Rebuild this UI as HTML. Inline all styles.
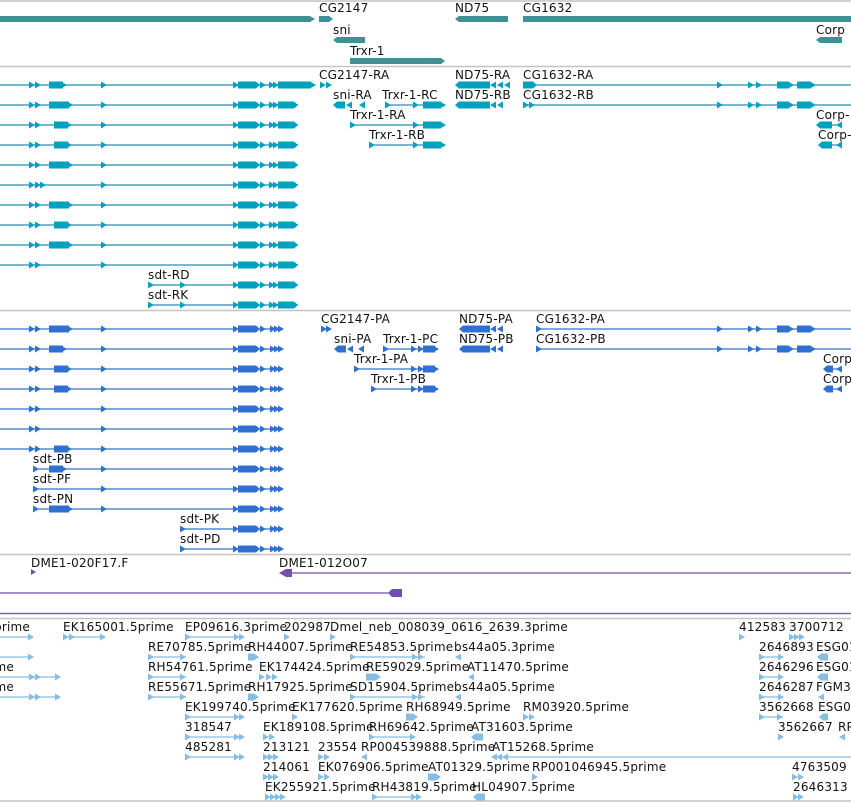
<!DOCTYPE html>
<html><head><meta charset="utf-8"><style>
html,body{margin:0;padding:0;background:#fff;}
svg{display:block;}
text{font-family:"DejaVu Sans","Liberation Sans",sans-serif;font-size:12px;letter-spacing:0.2px;fill:#111;}
</style></head><body>
<svg width="851" height="802" viewBox="0 0 851 802" xmlns="http://www.w3.org/2000/svg">
<defs>
<polygon id="tr" points="0,-3.5 6,0 0,3.5"/>
<polygon id="tl" points="6,-3.5 0,0 6,3.5"/>
<g id="cyEnd">
 <use href="#tr" x="233"/><polygon points="238,-3.5 256,-3.5 260,0 256,3.5 238,3.5"/>
 <use href="#tr" x="260"/><use href="#tr" x="269"/><use href="#tr" x="273"/>
 <polygon points="278,-3.5 294,-3.5 298,0 294,3.5 278,3.5"/>
</g>
<g id="cyStart"><use href="#tr" x="29"/><use href="#tr" x="35"/><use href="#tr" x="101"/></g>
<g id="blEnd">
 <use href="#tr" x="233"/><polygon points="238,-3.5 256,-3.5 260,0 256,3.5 238,3.5"/>
 <use href="#tr" x="260"/><use href="#tr" x="270"/><use href="#tr" x="274"/><use href="#tr" x="278"/>
</g>
</defs>

<g stroke="#c4c4c4" stroke-width="1.5">
<line x1="0" y1="1" x2="851" y2="1"/><line x1="0" y1="66.5" x2="851" y2="66.5"/>
<line x1="0" y1="310.5" x2="851" y2="310.5"/><line x1="0" y1="554.5" x2="851" y2="554.5"/>
<line x1="0" y1="618.5" x2="851" y2="618.5"/><line x1="0" y1="801" x2="851" y2="801"/>
</g>
<line x1="0" y1="613.5" x2="851" y2="613.5" stroke="#7a64a8" stroke-width="1.5"/>

<g fill="#3f9195">
<polygon points="0,16 310,16 315,19 310,22 0,22"/>
<polygon points="319,16 329,16 333,19 329,22 319,22"/>
<polygon points="337,37 365,37 365,43 337,43 333,40"/>
<polygon points="350,58 441,58 445,61 441,64 350,64"/>
<polygon points="459,16 508,16 508,22 459,22 455,19"/>
<rect x="523" y="16" width="328" height="6"/>
<polygon points="820,37 842,37 842,43 820,43 816,40"/>
</g>
<text x="319" y="12">CG2147</text><text x="333" y="34">sni</text><text x="350" y="55">Trxr-1</text>
<text x="455" y="12">ND75</text><text x="523" y="12">CG1632</text><text x="816" y="34">Corp</text>

<g fill="#00a0c0" stroke="#1893b3" stroke-width="1.2">
<g stroke="#1893b3"><line x1="0" y1="85" x2="298" y2="85"/><line x1="0" y1="105" x2="298" y2="105"/><line x1="0" y1="125" x2="298" y2="125"/><line x1="0" y1="145" x2="298" y2="145"/><line x1="0" y1="165" x2="298" y2="165"/><line x1="0" y1="185" x2="298" y2="185"/><line x1="0" y1="205" x2="298" y2="205"/><line x1="0" y1="225" x2="298" y2="225"/><line x1="0" y1="245" x2="298" y2="245"/><line x1="0" y1="265" x2="298" y2="265"/><line x1="148" y1="285" x2="298" y2="285"/><line x1="148" y1="305" x2="298" y2="305"/>
<line x1="385" y1="105" x2="445" y2="105"/><line x1="350" y1="125" x2="445" y2="125"/><line x1="369" y1="145" x2="445" y2="145"/>
<line x1="523" y1="85" x2="851" y2="85"/><line x1="523" y1="105" x2="851" y2="105"/><line x1="830" y1="125" x2="842" y2="125"/><line x1="830" y1="145" x2="842" y2="145"/></g>
<g stroke="none">
<g transform="translate(0,85)"><use href="#cyStart"/><rect x="49" y="-3.5" width="14" height="7"/><use href="#tr" x="61"/><use href="#cyEnd"/><rect x="278" y="-3.5" width="33" height="7"/><use href="#tr" x="310"/></g>
<g transform="translate(0,105)"><use href="#cyStart"/><rect x="49" y="-3.5" width="20" height="7"/><use href="#tr" x="67"/><use href="#cyEnd"/></g>
<g transform="translate(0,125)"><use href="#cyStart"/><rect x="54" y="-3.5" width="14" height="7"/><use href="#tr" x="66"/><use href="#cyEnd"/></g>
<g transform="translate(0,145)"><use href="#cyStart"/><rect x="54" y="-3.5" width="14" height="7"/><use href="#tr" x="66"/><use href="#cyEnd"/></g>
<g transform="translate(0,165)"><use href="#cyStart"/><rect x="49" y="-3.5" width="20" height="7"/><use href="#tr" x="67"/><use href="#cyEnd"/></g>
<g transform="translate(0,185)"><use href="#cyStart"/><use href="#tr" x="40"/><use href="#cyEnd"/></g>
<g transform="translate(0,205)"><use href="#cyStart"/><rect x="49" y="-3.5" width="20" height="7"/><use href="#tr" x="67"/><use href="#cyEnd"/></g>
<g transform="translate(0,225)"><use href="#cyStart"/><rect x="54" y="-3.5" width="14" height="7"/><use href="#tr" x="66"/><use href="#cyEnd"/></g>
<g transform="translate(0,245)"><use href="#cyStart"/><rect x="49" y="-3.5" width="20" height="7"/><use href="#tr" x="67"/><use href="#cyEnd"/></g>
<g transform="translate(0,265)"><use href="#cyStart"/><use href="#cyEnd"/></g>
<g transform="translate(0,285)"><use href="#tr" x="148"/><use href="#tr" x="180"/><use href="#cyEnd"/></g>
<g transform="translate(0,305)"><use href="#tr" x="148"/><use href="#tr" x="180"/><use href="#cyEnd"/></g>
<use href="#tr" x="320" y="85"/><use href="#tr" x="326" y="85"/>
<polygon points="337,101.5 345,101.5 345,108.5 337,108.5 333,105"/><use href="#tl" x="346" y="105"/><use href="#tl" x="359" y="105"/>
<use href="#tr" x="385" y="105"/><use href="#tr" x="413" y="105"/><rect x="423" y="101.5" width="18" height="7"/><use href="#tr" x="440" y="105"/>
<use href="#tr" x="350" y="125"/><use href="#tr" x="413" y="125"/><rect x="423" y="121.5" width="18" height="7"/><use href="#tr" x="440" y="125"/>
<use href="#tr" x="369" y="145"/><use href="#tr" x="413" y="145"/><rect x="423" y="141.5" width="18" height="7"/><use href="#tr" x="440" y="145"/>
<polygon points="459,81.5 490,81.5 490,88.5 459,88.5 455,85"/><use href="#tl" x="464" y="85"/><use href="#tl" x="490" y="85"/><use href="#tl" x="497" y="85"/><use href="#tl" x="504" y="85"/>
<polygon points="459,101.5 490,101.5 490,108.5 459,108.5 455,105"/><use href="#tl" x="464" y="105"/><use href="#tl" x="490" y="105"/><use href="#tl" x="497" y="105"/>
<polygon points="523,81.5 533,81.5 537,85 533,88.5 523,88.5"/><use href="#tr" x="523" y="105"/><use href="#tr" x="529" y="105"/>
<g transform="translate(0,85)"><use href="#tr" x="717"/><use href="#tr" x="748"/><use href="#tr" x="756"/><rect x="777" y="-3.5" width="12" height="7"/><use href="#tr" x="788"/><rect x="797" y="-3.5" width="14" height="7"/><use href="#tr" x="810"/></g>
<g transform="translate(0,105)"><use href="#tr" x="717"/><use href="#tr" x="748"/><use href="#tr" x="756"/><rect x="777" y="-3.5" width="12" height="7"/><use href="#tr" x="788"/><rect x="797" y="-3.5" width="14" height="7"/><use href="#tr" x="810"/></g>
<polygon points="820,121.5 832,121.5 832,128.5 820,128.5 816,125"/><use href="#tl" x="836" y="125"/>
<polygon points="822,141.5 832,141.5 832,148.5 822,148.5 818,145"/><use href="#tl" x="836" y="145"/>
</g></g>
<text x="319" y="79">CG2147-RA</text><text x="333" y="99">sni-RA</text><text x="382" y="99">Trxr-1-RC</text>
<text x="350" y="119">Trxr-1-RA</text><text x="369" y="139">Trxr-1-RB</text>
<text x="455" y="79">ND75-RA</text><text x="523" y="79">CG1632-RA</text><text x="455" y="99">ND75-RB</text><text x="523" y="99">CG1632-RB</text>
<text x="816" y="119">Corp-</text><text x="818" y="139">Corp-</text>
<text x="148" y="279">sdt-RD</text><text x="148" y="299">sdt-RK</text>

<g fill="#3070d0" stroke="#3070d0" stroke-width="1.2">
<line x1="0" y1="329" x2="283" y2="329"/><line x1="0" y1="349" x2="283" y2="349"/><line x1="0" y1="369" x2="283" y2="369"/><line x1="0" y1="389" x2="283" y2="389"/><line x1="0" y1="409" x2="283" y2="409"/><line x1="0" y1="429" x2="283" y2="429"/><line x1="0" y1="449" x2="283" y2="449"/><line x1="33" y1="469" x2="283" y2="469"/><line x1="33" y1="489" x2="283" y2="489"/><line x1="33" y1="509" x2="283" y2="509"/><line x1="180" y1="529" x2="283" y2="529"/><line x1="180" y1="549" x2="283" y2="549"/>
<line x1="354" y1="369" x2="438" y2="369"/><line x1="371" y1="389" x2="438" y2="389"/><line x1="383" y1="349" x2="438" y2="349"/>
<line x1="536" y1="329" x2="851" y2="329"/><line x1="536" y1="349" x2="851" y2="349"/><line x1="830" y1="369" x2="842" y2="369"/><line x1="830" y1="389" x2="842" y2="389"/>
<g stroke="none">
<g transform="translate(0,329)"><use href="#cyStart"/><rect x="49" y="-3.5" width="20" height="7"/><use href="#tr" x="67"/><use href="#blEnd"/></g>
<g transform="translate(0,349)"><use href="#cyStart"/><rect x="49" y="-3.5" width="14" height="7"/><use href="#tr" x="61"/><use href="#blEnd"/></g>
<g transform="translate(0,369)"><use href="#cyStart"/><rect x="54" y="-3.5" width="14" height="7"/><use href="#tr" x="66"/><use href="#blEnd"/></g>
<g transform="translate(0,389)"><use href="#cyStart"/><rect x="54" y="-3.5" width="14" height="7"/><use href="#tr" x="66"/><use href="#blEnd"/></g>
<g transform="translate(0,409)"><use href="#cyStart"/><use href="#blEnd"/></g>
<g transform="translate(0,429)"><use href="#cyStart"/><use href="#blEnd"/></g>
<g transform="translate(0,449)"><use href="#cyStart"/><rect x="54" y="-3.5" width="14" height="7"/><use href="#tr" x="66"/><use href="#blEnd"/></g>
<g transform="translate(0,469)"><use href="#tr" x="33"/><rect x="49" y="-3.5" width="14" height="7"/><use href="#tr" x="61"/><use href="#tr" x="101"/><use href="#blEnd"/></g>
<g transform="translate(0,489)"><use href="#tr" x="33"/><use href="#tr" x="101"/><use href="#blEnd"/></g>
<g transform="translate(0,509)"><use href="#tr" x="33"/><rect x="49" y="-3.5" width="20" height="7"/><use href="#tr" x="67"/><use href="#tr" x="101"/><use href="#blEnd"/></g>
<g transform="translate(0,529)"><use href="#tr" x="180"/><use href="#blEnd"/></g>
<g transform="translate(0,549)"><use href="#tr" x="180"/><use href="#blEnd"/></g>
<use href="#tr" x="321" y="329"/><use href="#tr" x="326" y="329"/>
<polygon points="338,345.5 346,345.5 346,352.5 338,352.5 334,349"/><use href="#tl" x="347" y="349"/><use href="#tl" x="358" y="349"/>
<use href="#tr" x="383" y="349"/><use href="#tr" x="411" y="349"/><rect x="423" y="345.5" width="12" height="7"/><use href="#tr" x="433" y="349"/><use href="#tr" x="418" y="349"/>
<use href="#tr" x="354" y="369"/><use href="#tr" x="411" y="369"/><use href="#tr" x="418" y="369"/><rect x="423" y="365.5" width="12" height="7"/><use href="#tr" x="433" y="369"/>
<use href="#tr" x="371" y="389"/><use href="#tr" x="411" y="389"/><use href="#tr" x="418" y="389"/><rect x="423" y="385.5" width="12" height="7"/><use href="#tr" x="433" y="389"/>
<polygon points="463,325.5 490,325.5 490,332.5 463,332.5 459,329"/><use href="#tl" x="468" y="329"/><use href="#tl" x="490" y="329"/><use href="#tl" x="497" y="329"/>
<polygon points="463,345.5 490,345.5 490,352.5 463,352.5 459,349"/><use href="#tl" x="468" y="349"/><use href="#tl" x="490" y="349"/><use href="#tl" x="497" y="349"/>
<use href="#tr" x="536" y="329"/><use href="#tr" x="536" y="349"/>
<g transform="translate(0,329)"><use href="#tr" x="717"/><use href="#tr" x="748"/><use href="#tr" x="756"/><rect x="777" y="-3.5" width="12" height="7"/><use href="#tr" x="788"/><rect x="797" y="-3.5" width="14" height="7"/><use href="#tr" x="810"/></g>
<g transform="translate(0,349)"><use href="#tr" x="717"/><use href="#tr" x="748"/><use href="#tr" x="756"/><rect x="777" y="-3.5" width="12" height="7"/><use href="#tr" x="788"/><rect x="797" y="-3.5" width="14" height="7"/><use href="#tr" x="810"/></g>
<polygon points="827,365.5 833,365.5 833,372.5 827,372.5 823,369"/><use href="#tl" x="836" y="369"/>
<polygon points="827,385.5 833,385.5 833,392.5 827,392.5 823,389"/><use href="#tl" x="836" y="389"/>
</g></g>
<text x="321" y="323">CG2147-PA</text><text x="334" y="343">sni-PA</text><text x="383" y="343">Trxr-1-PC</text>
<text x="354" y="363">Trxr-1-PA</text><text x="371" y="383">Trxr-1-PB</text>
<text x="459" y="323">ND75-PA</text><text x="536" y="323">CG1632-PA</text><text x="459" y="343">ND75-PB</text><text x="536" y="343">CG1632-PB</text>
<text x="823" y="363">Corp</text><text x="823" y="383">Corp</text>
<text x="33" y="463">sdt-PB</text><text x="33" y="483">sdt-PF</text><text x="33" y="503">sdt-PN</text>
<text x="180" y="523">sdt-PK</text><text x="180" y="543">sdt-PD</text>

<g fill="#7050a8" stroke="#7050a8" stroke-width="1.3">
<line x1="284" y1="573" x2="851" y2="573"/><line x1="0" y1="593" x2="400" y2="593"/>
<g stroke="none"><polygon points="31,569 36,572 31,575"/><polygon points="279,573 286,569 292,569 292,577 286,577"/><polygon points="392,589 402,589 402,597 392,597 388,593"/></g>
</g>
<text x="31" y="567">DME1-020F17.F</text><text x="279" y="567">DME1-012O07</text>

<g fill="#86bde2" stroke="#86bde2" stroke-width="1.2">
<line x1="0" y1="637" x2="33" y2="637"/><line x1="63" y1="637" x2="105" y2="637"/><line x1="185" y1="637" x2="243" y2="637"/>
<line x1="0" y1="657" x2="33" y2="657"/><line x1="148" y1="657" x2="186" y2="657"/><line x1="350" y1="657" x2="425" y2="657"/><line x1="759" y1="657" x2="783" y2="657"/>
<line x1="0" y1="677" x2="60" y2="677"/><line x1="148" y1="677" x2="186" y2="677"/><line x1="759" y1="677" x2="783" y2="677"/>
<line x1="0" y1="697" x2="60" y2="697"/><line x1="148" y1="697" x2="186" y2="697"/><line x1="350" y1="697" x2="425" y2="697"/><line x1="759" y1="697" x2="783" y2="697"/>
<line x1="185" y1="717" x2="243" y2="717"/><line x1="759" y1="717" x2="783" y2="717"/>
<line x1="185" y1="737" x2="243" y2="737"/><line x1="369" y1="737" x2="415" y2="737"/>
<line x1="185" y1="757" x2="243" y2="757"/><line x1="492" y1="757" x2="851" y2="757"/>
<line x1="372" y1="797" x2="418" y2="797"/>
<g stroke="none">
<use href="#tr" x="28" y="637"/><use href="#tr" x="63" y="637"/><use href="#tr" x="69" y="637"/><use href="#tr" x="100" y="637"/><use href="#tr" x="185" y="637"/><use href="#tr" x="234" y="637"/><use href="#tr" x="239" y="637"/><use href="#tr" x="284" y="637"/><use href="#tr" x="330" y="637"/><use href="#tr" x="739" y="637"/><use href="#tr" x="789" y="637"/><use href="#tr" x="794" y="637"/><use href="#tr" x="799" y="637"/>
<use href="#tr" x="28" y="657"/><use href="#tr" x="148" y="657"/><use href="#tr" x="180" y="657"/><polygon points="248,653.5 254,653.5 259,657 254,660.5 248,660.5"/><use href="#tr" x="350" y="657"/><use href="#tr" x="412" y="657"/><use href="#tr" x="418" y="657"/><use href="#tl" x="455" y="657"/><use href="#tr" x="759" y="657"/><use href="#tr" x="778" y="657"/><polygon points="821,653.5 828,653.5 828,660.5 821,660.5 817,657"/>
<use href="#tr" x="29" y="677"/><use href="#tr" x="35" y="677"/><use href="#tr" x="55" y="677"/><use href="#tr" x="148" y="677"/><use href="#tr" x="180" y="677"/><use href="#tr" x="259" y="677"/><use href="#tr" x="266" y="677"/><use href="#tr" x="272" y="677"/><polygon points="366,673.5 376,673.5 381,677 376,680.5 366,680.5"/><use href="#tl" x="468" y="677"/><use href="#tr" x="759" y="677"/><use href="#tr" x="778" y="677"/><polygon points="821,673.5 828,673.5 828,680.5 821,680.5 817,677"/>
<use href="#tr" x="29" y="697"/><use href="#tr" x="35" y="697"/><use href="#tr" x="55" y="697"/><use href="#tr" x="148" y="697"/><use href="#tr" x="180" y="697"/><polygon points="248,693.5 254,693.5 259,697 254,700.5 248,700.5"/><use href="#tr" x="350" y="697"/><use href="#tr" x="412" y="697"/><use href="#tr" x="418" y="697"/><use href="#tl" x="455" y="697"/><use href="#tr" x="759" y="697"/><use href="#tr" x="778" y="697"/><use href="#tl" x="818" y="697"/>
<use href="#tr" x="185" y="717"/><use href="#tr" x="234" y="717"/><use href="#tr" x="239" y="717"/><use href="#tr" x="292" y="717"/><polygon points="406,713.5 413,713.5 418,717 413,720.5 406,720.5"/><use href="#tr" x="523" y="717"/><use href="#tr" x="529" y="717"/><use href="#tr" x="759" y="717"/><use href="#tr" x="777" y="717"/><polygon points="823,713.5 828,713.5 828,720.5 823,720.5 819,717"/>
<use href="#tr" x="185" y="737"/><use href="#tr" x="234" y="737"/><use href="#tr" x="239" y="737"/><use href="#tr" x="263" y="737"/><use href="#tr" x="269" y="737"/><use href="#tr" x="369" y="737"/><use href="#tr" x="410" y="737"/><polygon points="475,733.5 483,733.5 483,740.5 475,740.5 471,737"/><use href="#tr" x="778" y="737"/><use href="#tl" x="839" y="737"/>
<use href="#tr" x="185" y="757"/><use href="#tr" x="234" y="757"/><use href="#tr" x="239" y="757"/><use href="#tr" x="263" y="757"/><use href="#tr" x="268" y="757"/><use href="#tr" x="273" y="757"/><use href="#tr" x="318" y="757"/><use href="#tr" x="324" y="757"/><use href="#tl" x="361" y="757"/><use href="#tl" x="491" y="757"/><use href="#tl" x="496" y="757"/><use href="#tl" x="502" y="757"/>
<use href="#tr" x="263" y="777"/><use href="#tr" x="268" y="777"/><use href="#tr" x="273" y="777"/><use href="#tr" x="318" y="777"/><use href="#tr" x="324" y="777"/><polygon points="428,773.5 436,773.5 441,777 436,780.5 428,780.5"/><use href="#tr" x="532" y="777"/><use href="#tr" x="792" y="777"/><use href="#tr" x="798" y="777"/>
<use href="#tr" x="265" y="797"/><use href="#tr" x="270" y="797"/><use href="#tr" x="275" y="797"/><use href="#tr" x="280" y="797"/><use href="#tr" x="372" y="797"/><use href="#tr" x="411" y="797"/><use href="#tr" x="416" y="797"/><polygon points="477,793.5 485,793.5 485,800.5 477,800.5 473,797"/><use href="#tr" x="793" y="797"/><use href="#tr" x="798" y="797"/>
</g></g>
<g>
<text x="-6" y="631">prime</text><text x="63" y="631">EK165001.5prime</text><text x="185" y="631">EP09616.3prime</text><text x="284" y="631">202987</text><text x="330" y="631">Dmel_neb_008039_0616_2639.3prime</text><text x="739" y="631">412583</text><text x="789" y="631">3700712</text>
<text x="148" y="651">RE70785.5prime</text><text x="248" y="651">RH44007.5prime</text><text x="350" y="651">RE54853.5prime</text><text x="454" y="651">bs44a05.3prime</text><text x="759" y="651">2646893</text><text x="816" y="651">ESG01</text>
<text x="-22" y="671">prime</text><text x="148" y="671">RH54761.5prime</text><text x="259" y="671">EK174424.5prime</text><text x="366" y="671">RE59029.5prime</text><text x="467" y="671">AT11470.5prime</text><text x="759" y="671">2646296</text><text x="816" y="671">ESG01</text>
<text x="-22" y="691">prime</text><text x="148" y="691">RE55671.5prime</text><text x="248" y="691">RH17925.5prime</text><text x="350" y="691">SD15904.5prime</text><text x="454" y="691">bs44a05.5prime</text><text x="759" y="691">2646287</text><text x="816" y="691">FGM33</text>
<text x="185" y="711">EK199740.5prime</text><text x="292" y="711">EK177620.5prime</text><text x="406" y="711">RH68949.5prime</text><text x="523" y="711">RM03920.5prime</text><text x="759" y="711">3562668</text><text x="818" y="711">ESG01</text>
<text x="185" y="731">318547</text><text x="263" y="731">EK189108.5prime</text><text x="369" y="731">RH69642.5prime</text><text x="471" y="731">AT31603.5prime</text><text x="778" y="731">3562667</text><text x="838" y="731">RP</text>
<text x="185" y="751">485281</text><text x="263" y="751">213121</text><text x="318" y="751">23554</text><text x="361" y="751">RP004539888.5prime</text><text x="492" y="751">AT15268.5prime</text>
<text x="263" y="771">214061</text><text x="318" y="771">EK076906.5prime</text><text x="428" y="771">AT01329.5prime</text><text x="532" y="771">RP001046945.5prime</text><text x="792" y="771">4763509</text>
<text x="265" y="791">EK255921.5prime</text><text x="372" y="791">RH43819.5prime</text><text x="472" y="791">HL04907.5prime</text><text x="793" y="791">2646313</text>
</g>
</svg>
</body></html>
